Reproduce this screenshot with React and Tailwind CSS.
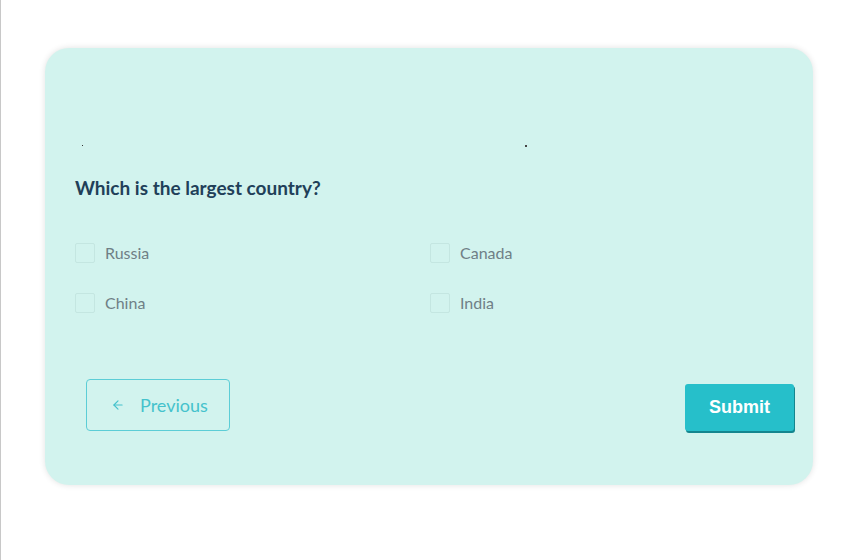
import { ArrowLeft } from "lucide-react";

const options = ["Russia", "Canada", "China", "India"];

function Option({ label }) {
  return (
    <label className="flex items-center h-[20px]">
      <span className="w-[20px] h-[20px] border border-[#c4e6e1] bg-[#d2f3ee] rounded-[2px] shrink-0"></span>
      <span className="ml-[10px] text-[16px] text-[#6f7f86] leading-none">{label}</span>
    </label>
  );
}

export default function App() {
  return (
    <div className="w-[868px] h-[560px] bg-white border-l border-[#c8c8c8] font-['Lato','Open_Sans',sans-serif] overflow-hidden">
      <div className="ml-[44px] mt-[48px] w-[768px] h-[437px] bg-[#d2f3ee] rounded-[24px] shadow-[0_0_6px_rgba(0,0,0,0.12)] flex flex-col">
        <div className="flex h-[2px] mt-[97px] pl-[37px]">
          <span className="w-[1px] h-[1px] bg-[#333]"></span>
          <span className="w-[2px] h-[2px] bg-[#444] ml-[442px]"></span>
        </div>
        <h2 className="mt-[31px] pl-[30px] text-[19px] font-bold text-[#213f59] leading-[20px]">
          Which is the largest country?
        </h2>
        <div className="grid grid-cols-[355px_1fr] gap-y-[30px] mt-[45px] pl-[30px]">
          {options.map((o) => (
            <Option key={o} label={o} />
          ))}
        </div>
        <div className="flex justify-between items-end mt-[66px] pl-[41px] pr-[19px]">
          <button className="w-[144px] h-[52px] border border-[#5ccdd6] rounded-[4px] flex items-center pl-[24px] text-[#45c2cc] text-[18px]">
            <ArrowLeft size={14} strokeWidth={2} />
            <span className="ml-[15px]">Previous</span>
          </button>
          <button className="w-[109px] h-[47px] bg-[#26bfca] rounded-[3px] shadow-[1px_2px_0_#14858e] text-white text-[18px] font-bold font-['Liberation_Sans',Arial,sans-serif]">
            Submit
          </button>
        </div>
      </div>
    </div>
  );
}
